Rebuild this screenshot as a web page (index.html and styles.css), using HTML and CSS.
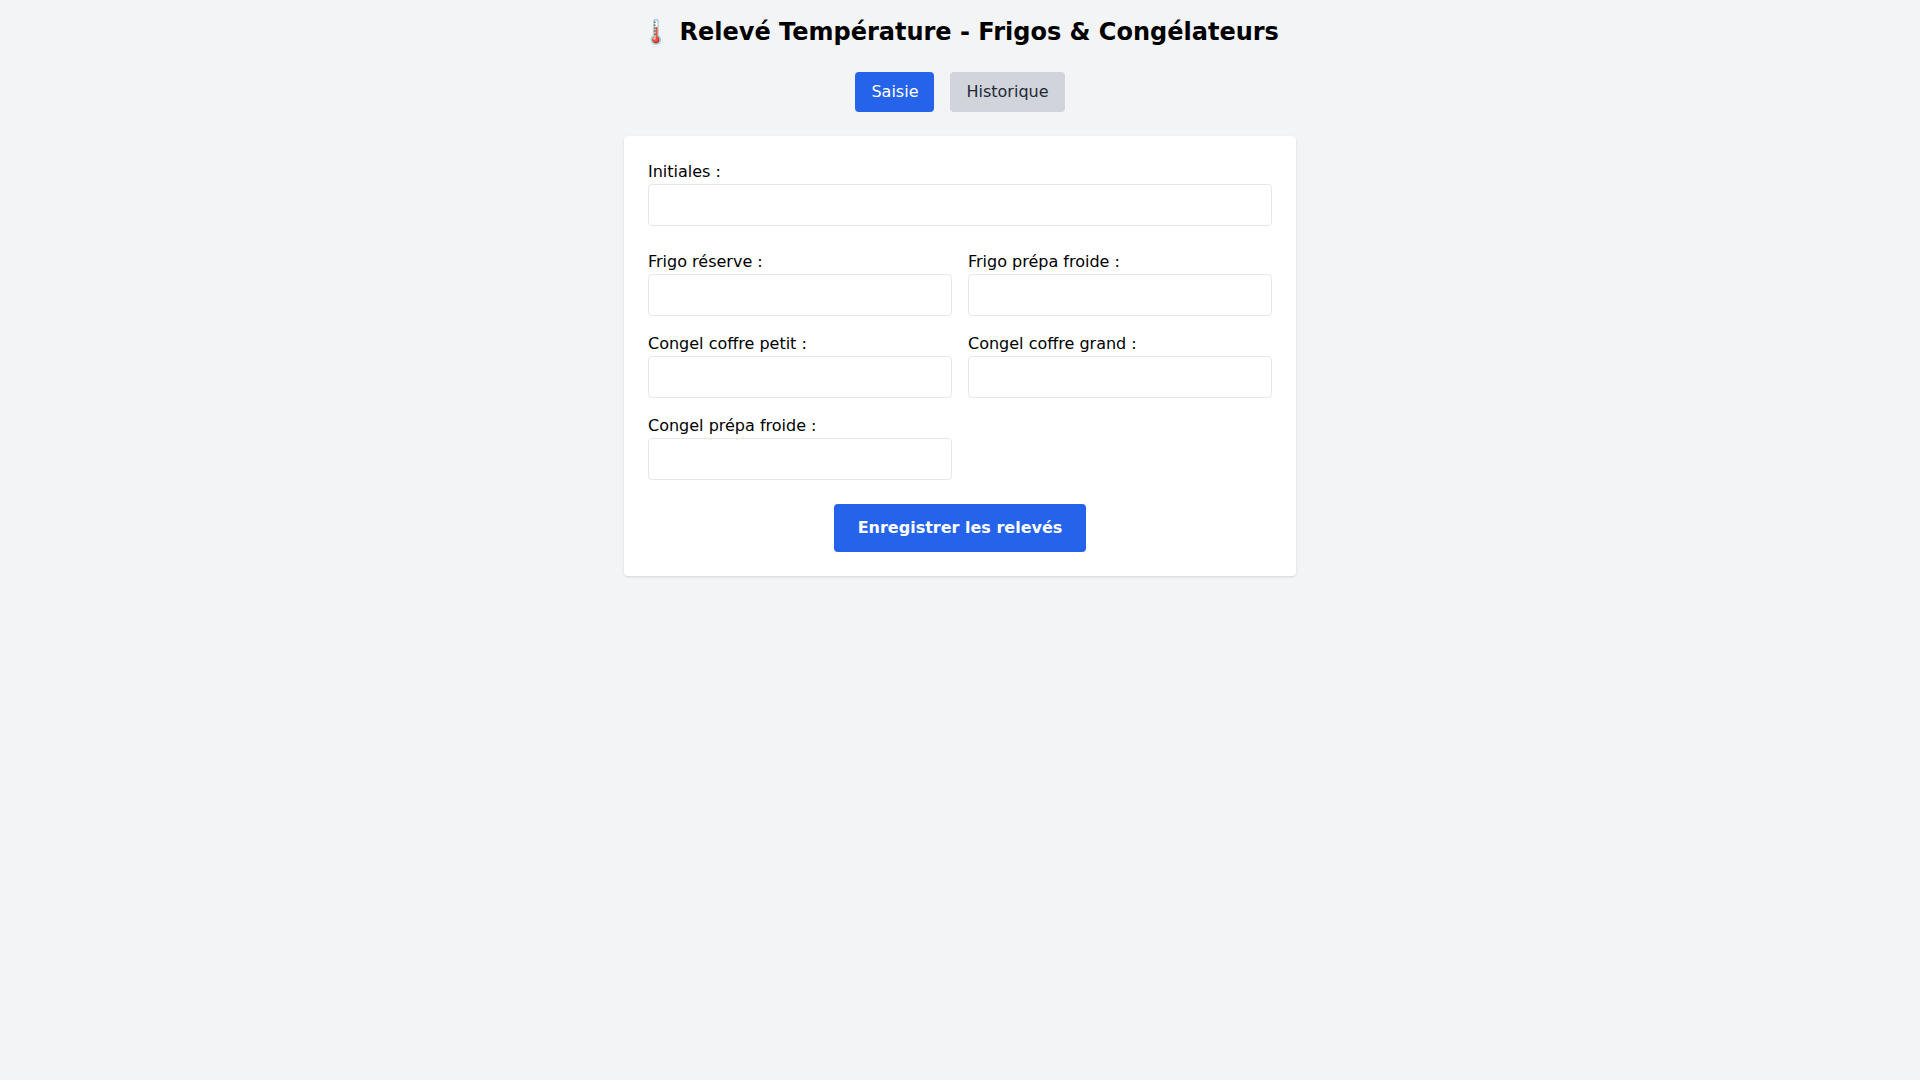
FILE: index.html
```html
<!DOCTYPE html>
<html lang="fr">
<head>
<meta charset="UTF-8">
<meta name="viewport" content="width=device-width, initial-scale=1">
<title>Relevé Température</title>
<link rel="stylesheet" href="styles.css">
</head>
<body>
<main class="page">
  <h1 class="title">🌡️ Relevé Température - Frigos &amp; Congélateurs</h1>
  <nav class="tabs">
    <button type="button" class="tab tab-active">Saisie</button>
    <button type="button" class="tab">Historique</button>
  </nav>
  <form class="card">
    <div class="field">
      <label for="initiales">Initiales :</label>
      <input id="initiales" type="text">
    </div>
    <div class="grid">
      <div class="field">
        <label for="frigo-reserve">Frigo réserve :</label>
        <input id="frigo-reserve" type="number" step="0.1">
      </div>
      <div class="field">
        <label for="frigo-prepa">Frigo prépa froide :</label>
        <input id="frigo-prepa" type="number" step="0.1">
      </div>
      <div class="field">
        <label for="congel-petit">Congel coffre petit :</label>
        <input id="congel-petit" type="number" step="0.1">
      </div>
      <div class="field">
        <label for="congel-grand">Congel coffre grand :</label>
        <input id="congel-grand" type="number" step="0.1">
      </div>
      <div class="field">
        <label for="congel-prepa">Congel prépa froide :</label>
        <input id="congel-prepa" type="number" step="0.1">
      </div>
    </div>
    <button type="submit" class="submit">Enregistrer les relevés</button>
  </form>
</main>
</body>
</html>
```
FILE: styles.css
```css
*,
*::before,
*::after {
  box-sizing: border-box;
}

body {
  margin: 0;
  min-height: 100vh;
  padding: 16px;
  background: #f3f4f6;
  color: #000;
  font-family: "DejaVu Sans", sans-serif;
  font-size: 16px;
  line-height: 24px;
}

button,
input {
  font: inherit;
}

.page {
  max-width: 672px;
  margin: 0 auto;
}

.title {
  margin: 0 0 24px;
  font-size: 24px;
  line-height: 32px;
  font-weight: 700;
  text-align: center;
}

.tabs {
  display: flex;
  justify-content: center;
  gap: 16px;
  margin-bottom: 24px;
}

.tab {
  padding: 8px 16px;
  border: 0;
  border-radius: 4px;
  background: #d1d5db;
  color: #1f2937;
  cursor: pointer;
}

.tab-active {
  background: #2563eb;
  color: #fff;
}

.card {
  display: flex;
  flex-direction: column;
  gap: 24px;
  padding: 24px;
  border-radius: 4px;
  background: #fff;
  box-shadow: 0 1px 3px rgba(0, 0, 0, 0.1), 0 1px 2px -1px rgba(0, 0, 0, 0.1);
}

.field label {
  display: block;
}

.field input {
  display: block;
  width: 100%;
  padding: 8px;
  border: 1px solid #e5e7eb;
  border-radius: 4px;
  background: #fff;
}

.grid {
  display: grid;
  grid-template-columns: repeat(2, minmax(0, 1fr));
  gap: 16px;
}

.submit {
  align-self: center;
  padding: 12px 24px;
  border: 0;
  border-radius: 4px;
  background: #2563eb;
  color: #fff;
  font-weight: 700;
  cursor: pointer;
}
```
